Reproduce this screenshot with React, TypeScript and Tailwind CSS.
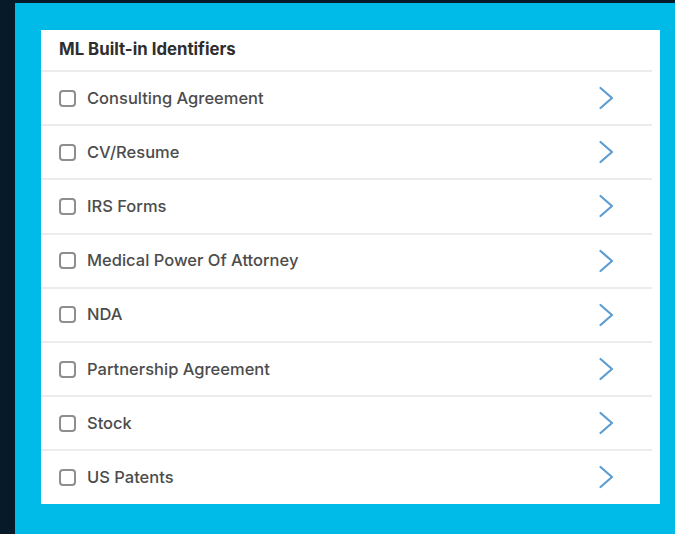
const identifiers = [
  "Consulting Agreement",
  "CV/Resume",
  "IRS Forms",
  "Medical Power Of Attorney",
  "NDA",
  "Partnership Agreement",
  "Stock",
  "US Patents",
]

function Chevron() {
  return (
    <svg width="16" height="24" viewBox="0 0 16 24" fill="none">
      <path d="M2.5 2 L14 12 L2.5 22" stroke="#5b9dd2" strokeWidth="2.2" strokeLinecap="round" strokeLinejoin="round" />
    </svg>
  )
}

function IdentifierRow({ label }: { label: string }) {
  return (
    <div className="mr-2 flex h-[54.2px] items-center justify-between border-t-2 border-[#ececec] pl-[18px] pr-[38px]">
      <label className="flex items-center gap-[11px]">
        <span className="h-[17px] w-[17px] rounded-[4px] border-2 border-[#8e8e8e] bg-white" />
        <span className="text-[16.5px] font-medium text-[#4c4c4c]">{label}</span>
      </label>
      <Chevron />
    </div>
  )
}

export default function App() {
  return (
    <div className="h-[534px] w-[675px] bg-[#061a29] pl-[15px] pt-[3px] font-['Inter',sans-serif]">
      <div className="h-full bg-[#00bbe7] pl-[26px] pr-[15px] pt-[27px]">
        <div className="w-[619px] bg-white">
          <div className="flex h-[40px] items-center pl-[18px] text-[16.8px] font-bold text-[#2e2e2e]">
            ML Built-in Identifiers
          </div>
          {identifiers.map((name) => (
            <IdentifierRow key={name} label={name} />
          ))}
        </div>
      </div>
    </div>
  )
}
